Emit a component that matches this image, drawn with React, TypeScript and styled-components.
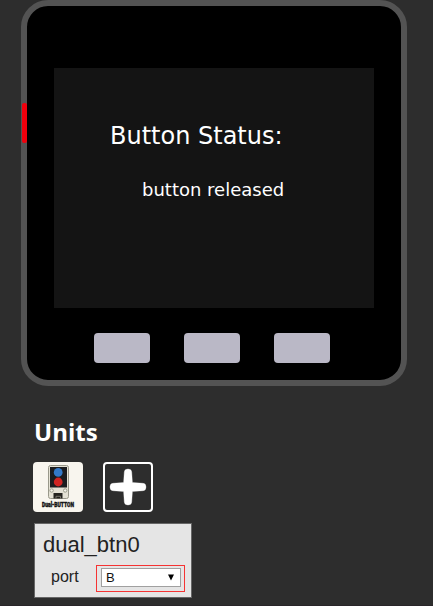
import React from "react";
import styled, { createGlobalStyle } from "styled-components";

const GlobalStyle = createGlobalStyle`
  * { box-sizing: border-box; }
  body { margin: 0; background: #2d2d2d; overflow: hidden; }
`;

const Page = styled.main`
  width: 433px;
  height: 606px;
  overflow: hidden;
  background: #2d2d2d;
  border-bottom: 1px solid #292529;
`;

const Device = styled.section`
  position: relative;
  width: 386px;
  height: 386px;
  margin-left: 21px;
  padding: 62px 27px 0;
  background: #000;
  border: 6px solid #535353;
  border-radius: 27px;
`;

const PowerButton = styled.div`
  position: absolute;
  left: -5px;
  top: 97px;
  width: 5px;
  height: 40px;
  border-radius: 2px;
  background: #f0000c;
`;

const Screen = styled.div`
  width: 320px;
  height: 240px;
  padding-top: 53px;
  background: #141414;
  color: #fff;
  font-family: "DejaVu Sans", sans-serif;
`;

const ScreenLine = styled.div<{ $size: number; $indent: number; $height: number }>`
  padding-left: ${(p) => p.$indent}px;
  font-size: ${(p) => p.$size}px;
  line-height: ${(p) => p.$height}px;
  white-space: nowrap;
`;

const Keys = styled.div`
  display: flex;
  gap: 34px;
  padding: 25px 0 0 40px;
`;

const Key = styled.div`
  width: 56px;
  height: 30px;
  border-radius: 4px;
  background: #bab8c6;
`;

const Units = styled.section`
  padding: 28px 0 0 33px;
`;

const Heading = styled.h2`
  margin: 0 0 0 1px;
  height: 36px;
  color: #fff;
  font: 700 24px/36px "Open Sans", sans-serif;
`;

const Tiles = styled.div`
  display: flex;
  gap: 20px;
  margin-top: 12px;
`;

const Tile = styled.div<{ $filled?: boolean }>`
  width: 50px;
  height: 50px;
  border-radius: 4px;
  border: ${(p) => (p.$filled ? "none" : "2px solid #fff")};
  background: ${(p) => (p.$filled ? "#f8f5ee" : "#2d2d2d")};
  svg { display: block; overflow: visible; }
`;

const Card = styled.div`
  width: 158px;
  height: 75px;
  margin: 11px 0 0 1px;
  padding: 7px 0 0 8px;
  background: #e5e5e5;
  border: 1px solid #666;
  color: #222;
  font-family: "Liberation Sans", Arial, sans-serif;
`;

const CardTitle = styled.div`
  font-size: 22px;
  line-height: 28px;
`;

const Field = styled.div`
  display: flex;
  margin-top: 6px;
`;

const Label = styled.div`
  width: 53px;
  padding-left: 8px;
  font-size: 16px;
  line-height: 24px;
`;

const Highlight = styled.div`
  width: 89px;
  height: 27px;
  padding: 2px 4px;
  border: 1px solid #f53333;
`;

const Select = styled.div`
  display: flex;
  align-items: center;
  justify-content: space-between;
  width: 80px;
  height: 19px;
  padding: 0 6px 0 4px;
  background: #fff;
  border: 1px solid #a0a0a0;
  color: #111;
  font-size: 13px;
  line-height: 17px;
`;

const DualButtonIcon = () => (
  <svg width="50" height="50" viewBox="0 0 50 50">
    <rect x="15.5" y="3.5" width="20" height="33" rx="2" fill="#e4e1d4" stroke="#99988a" />
    <rect x="17" y="5" width="17" height="20.5" fill="#1b1c1f" />
    <circle cx="25.2" cy="10.4" r="4.4" fill="#3379c8" />
    <circle cx="25.2" cy="20" r="4.4" fill="#cf2422" />
    <circle cx="18.6" cy="28.5" r="1.7" fill="#f4f2e9" stroke="#9b9c8c" />
    <circle cx="32.2" cy="28.5" r="1.7" fill="#f4f2e9" stroke="#9b9c8c" />
    <path d="M20.5 36.5V31h9v5.5z" fill="#25231f" />
    <path d="M23 36.5v-2.2h4.5v2.2" fill="none" stroke="#77756b" />
    <text x="9" y="45.2" textLength="32" lengthAdjust="spacingAndGlyphs" fontFamily="Roboto, sans-serif" fontSize="6.8" fontWeight="900" fill="#151515" stroke="#151515" strokeWidth=".4">
      Dual-BUTTON
    </text>
  </svg>
);

const PlusIcon = () => (
  <svg width="46" height="46" viewBox="0 0 46 46">
    <path
      d="M19.3 8Q19.5 5 23 5T26.7 8L27.4 18.6 38 19.3Q41 19.5 41 23T38 26.7L27.4 27.4 26.7 38Q26.5 41 23 41T19.3 38L18.6 27.4 8 26.7Q5 26.5 5 23T8 19.3L18.6 18.6Z"
      fill="#fff"
      stroke="#fff"
      strokeOpacity=".35"
      strokeLinejoin="round"
    />
  </svg>
);

const Arrow = () => (
  <svg width="6" height="7" viewBox="0 0 6 7">
    <path d="M0 .5h6L3 6.5z" fill="#000" />
  </svg>
);

export default function App() {
  return (
    <Page>
      <GlobalStyle />
      <Device>
        <PowerButton />
        <Screen>
          <ScreenLine $size={24} $indent={56} $height={30}>Button Status:</ScreenLine>
          <ScreenLine $size={18} $indent={88} $height={78}>button released</ScreenLine>
        </Screen>
        <Keys>
          <Key />
          <Key />
          <Key />
        </Keys>
      </Device>
      <Units>
        <Heading>Units</Heading>
        <Tiles>
          <Tile $filled><DualButtonIcon /></Tile>
          <Tile><PlusIcon /></Tile>
        </Tiles>
        <Card>
          <CardTitle>dual_btn0</CardTitle>
          <Field>
            <Label>port</Label>
            <Highlight>
              <Select>B<Arrow /></Select>
            </Highlight>
          </Field>
        </Card>
      </Units>
    </Page>
  );
}
